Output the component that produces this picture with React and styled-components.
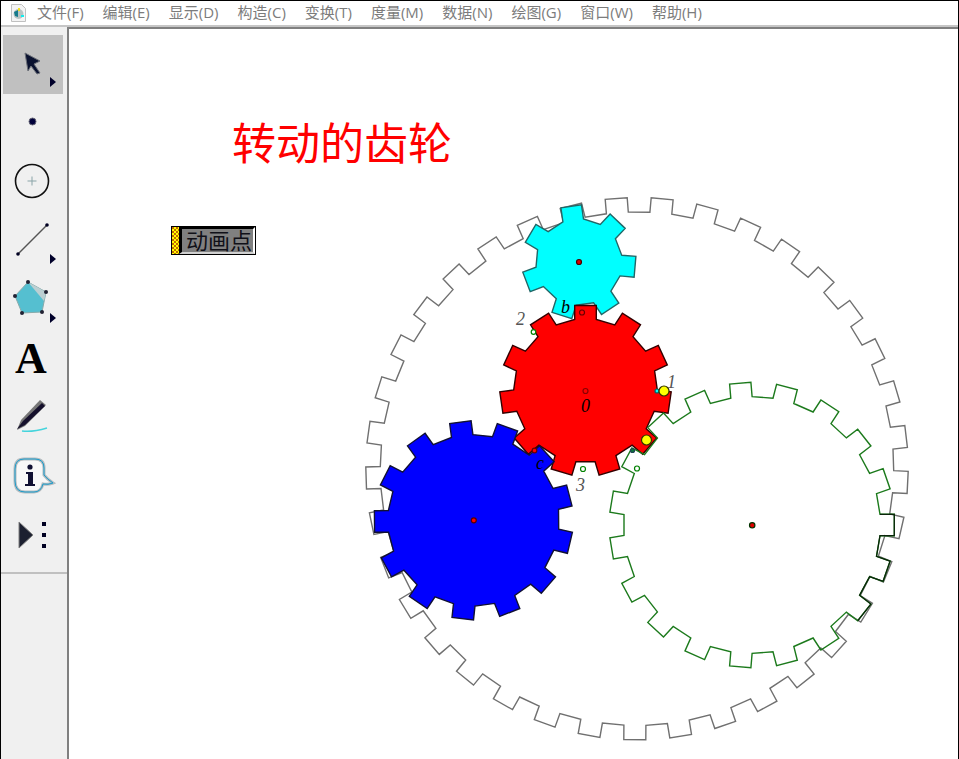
import React from "react";
import styled, { createGlobalStyle } from "styled-components";

const GlobalStyle = createGlobalStyle`
  * { box-sizing: border-box; }
  body { margin: 0; background: #fff; overflow: hidden; }
`;

const Window = styled.div`
  display: flex;
  flex-direction: column;
  height: 100vh;
  border: 1px solid #000;
  border-bottom: 0;
  background: #fff;
`;

const MenuBar = styled.nav`
  display: flex;
  align-items: center;
  gap: 19px;
  height: 24px;
  flex: none;
  padding-left: 10px;
`;

const AppIcon = styled.svg`
  width: 16px;
  height: 20px;
  flex: none;
  margin-right: -9px;
`;

const MenuItem = styled.button`
  padding: 0 0 2px;
  border: 0;
  background: none;
  color: #7c7c7c;
  font: 15px/20px "Open Sans", "Noto Sans CJK SC", sans-serif;
  white-space: nowrap;
`;

const Workspace = styled.div`
  display: flex;
  flex: 1;
  min-height: 0;
  border-top: 2px solid #c6c6c6;
`;

const ToolBar = styled.aside`
  display: flex;
  flex-direction: column;
  width: 66px;
  flex: none;
  padding-top: 8px;
  background: #f0f0f0;
`;

const ToolGroup = styled.div`
  display: flex;
  flex-direction: column;
  padding: 0 4px 6px 2px;
  border-bottom: 2px solid #c0c0c0;
`;

const ToolButton = styled.button`
  display: block;
  height: 59px;
  padding: 0;
  border: 0;
  background: ${(p) => (p.$active ? "#c0c0c0" : "transparent")};

  svg {
    display: block;
    width: 60px;
    height: 59px;
  }
`;

const Sketch = styled.main`
  position: relative;
  flex: 1;
  min-width: 0;
  overflow: hidden;
  border-top: 2px solid #808080;
  border-left: 2px solid #808080;
  background: #fff;
`;

const Drawing = styled.svg`
  display: block;
  width: 890px;
  height: 730px;
`;

const Title = styled.h1`
  position: absolute;
  left: 163px;
  top: 85px;
  margin: 0;
  color: #f00;
  font: 400 44px/54px "Noto Sans CJK SC", sans-serif;
  white-space: nowrap;
`;

const ActionButton = styled.button`
  position: absolute;
  left: 102px;
  top: 197px;
  display: flex;
  height: 29px;
  padding: 0;
  border: 1px solid #000;
  background: #808080;
`;

const ButtonGrip = styled.span`
  width: 7px;
  align-self: stretch;
  background: repeating-conic-gradient(#ff0 0 25%, #c46a00 0 50%) 0 0 / 4px 4px;
`;

const ButtonFace = styled.span`
  display: flex;
  align-items: center;
  height: 27px;
  padding: 0 1px 4px 4px;
  border-style: solid;
  border-color: #000 #fff #d0d0d0 #000;
  border-width: 2px 2px 2px 3px;
  color: #101018;
  font: 400 22px/32px "Noto Sans CJK SC", sans-serif;
  white-space: nowrap;
`;

const Label = styled.text`
  font: italic 18px "Liberation Serif", serif;
  fill: ${(p) => (p.$soft ? "#555" : "#000")};
`;

function gearPoints({ cx, cy, teeth, phase, root, tip, half }) {
  const points = [];
  for (let i = 0; i < teeth; i += 1) {
    const a = ((phase + (360 / teeth) * i) * Math.PI) / 180;
    const ux = Math.cos(a);
    const uy = Math.sin(a);
    [
      [root, -half],
      [tip, -half],
      [tip, half],
      [root, half],
    ].forEach(([r, s]) => {
      points.push(`${(cx + ux * r - uy * s).toFixed(1)},${(cy + uy * r + ux * s).toFixed(1)}`);
    });
  }
  return points;
}

const ring = { cx: 637, cy: 468.7, teeth: 37, phase: -94.4, root: 256.5, tip: 271, half: 11 };
const cyan = { cx: 579, cy: 262, teeth: 7, phase: 4.9, root: 42, tip: 56.2, half: 10.4 };
const red = { cx: 585.5, cy: 390.5, teeth: 11, phase: -90, root: 71, tip: 85, half: 10.8 };
const blue = { cx: 473.5, cy: 520.3, teeth: 13, phase: 179.3, root: 85, tip: 99, half: 10.8 };
const green = { cx: 752, cy: 525, teeth: 19, phase: 0, root: 128, tip: 142.3, half: 10.7 };

const points = [
  { x: 579, y: 262, r: 2.5, fill: "#e00000", stroke: "#400" },
  { x: 582, y: 312.5, r: 2.5, fill: "#f00", stroke: "#600" },
  { x: 585.5, y: 391, r: 2.5, fill: "#f00", stroke: "#800" },
  { x: 533.5, y: 332, r: 2.3, fill: "#fff", stroke: "#008000" },
  { x: 534.5, y: 450.5, r: 2.3, fill: "#f00", stroke: "#600" },
  { x: 583, y: 469, r: 2.5, fill: "#fff", stroke: "#008000" },
  { x: 637, y: 468.5, r: 2.5, fill: "#fff", stroke: "#008000" },
  { x: 632.5, y: 450.5, r: 2, fill: "#0a7a3a", stroke: "#245" },
  { x: 657, y: 391, r: 2, fill: "#0ff", stroke: "#066" },
  { x: 664, y: 391, r: 5, fill: "#ff0", stroke: "#330" },
  { x: 646.5, y: 440, r: 5, fill: "#ff0", stroke: "#330" },
  { x: 473.8, y: 520.3, r: 2.5, fill: "#f00", stroke: "#500" },
  { x: 752.2, y: 525.3, r: 2.7, fill: "#e00000", stroke: "#030" },
];

const labels = [
  { x: 561, y: 313, text: "b" },
  { x: 581, y: 412, text: "0" },
  { x: 536, y: 469, text: "c" },
  { x: 516, y: 325, text: "2", soft: true },
  { x: 667, y: 388, text: "1", soft: true },
  { x: 576, y: 491, text: "3", soft: true },
];

function Gear({ gear, fill = "none", stroke }) {
  return <polygon points={gearPoints(gear).join(" ")} fill={fill} stroke={stroke} strokeWidth="1.4" />;
}

function Gears() {
  return (
    <Drawing viewBox="69 29 890 730" role="img" aria-label="齿轮">
      <Gear gear={ring} stroke="#707070" />
      <Gear gear={cyan} fill="#0ff" stroke="#266" />
      <Gear gear={red} fill="#f00" stroke="#300" />
      <Gear gear={blue} fill="#00f" stroke="#113" />
      <Gear gear={green} stroke="#1c7a1c" />
      <polyline points={gearPoints(green).slice(0, 11).join(" ")} fill="none" stroke="#0a240a" strokeWidth="1.2" />
      {labels.map((l) => (
        <Label key={l.text} x={l.x} y={l.y} $soft={l.soft}>
          {l.text}
        </Label>
      ))}
      {points.map((p) => (
        <circle key={`${p.x}-${p.y}`} cx={p.x} cy={p.y} r={p.r} fill={p.fill} stroke={p.stroke} strokeWidth="1.2" />
      ))}
    </Drawing>
  );
}

const more = <path d="M47 42v10l6-5z" fill="#00002a" />;

const tools = [
  {
    name: "选择",
    art: (
      <>
        <path d="M22 18l15 8-6 3 6 9-3 1-6-8-3 5z" fill="#0a1230" stroke="#6c7078" />
        {more}
      </>
    ),
  },
  { name: "点", art: <circle cx="29.5" cy="27.5" r="3.5" fill="#00003a" stroke="#667" /> },
  {
    name: "圆",
    art: (
      <>
        <circle cx="29" cy="28" r="16.5" fill="none" stroke="#111" strokeWidth="1.6" />
        <path d="M24.5 28h9M29 23.5v9" stroke="#8aa4a8" />
      </>
    ),
  },
  {
    name: "线段",
    art: (
      <>
        <path d="M15 42L44 13" stroke="#555" strokeWidth="1.5" />
        <circle cx="15" cy="42" r="1.8" fill="#002" />
        <circle cx="44" cy="13" r="1.8" fill="#002" />
        {more}
      </>
    ),
  },
  {
    name: "多边形",
    art: (
      <>
        <path d="M25 11L43 21L39 41L19 42L12 25z" fill="#55bfd0" stroke="#8aa" />
        <path d="M25 11L43 21L41 30z" fill="#bccfd2" />
        {[[25, 11], [43, 21], [39, 41], [19, 42], [12, 25]].map(([x, y]) => (
          <circle key={x} cx={x} cy={y} r="2" fill="#223" />
        ))}
        {more}
      </>
    ),
  },
  {
    name: "文本",
    art: (
      <text x="28" y="43" textAnchor="middle" fontFamily="Liberation Serif, serif" fontWeight="700" fontSize="44">
        A
      </text>
    ),
  },
  {
    name: "标记",
    art: (
      <>
        <path d="M14 41L18 31L37 11l6 5L22 37z" fill="#777" />
        <path d="M14 40L20 32L39 14l3 3L22 36z" fill="#15102c" />
        <path d="M19 42c8 1 15 0 25-3" fill="none" stroke="#45d4dc" strokeWidth="1.5" />
      </>
    ),
  },
  {
    name: "信息",
    art: (
      <>
        <path
          d="M21 11h11q9 0 9 9v7q3 4 9 8-5 2-10 1-2 8-9 8H22q-10 0-10-11V21q0-10 9-10z"
          fill="#f8f8f8"
          stroke="#b4bcc0"
          strokeWidth="3"
        />
        <path
          d="M21 11h11q9 0 9 9v7q3 4 9 8-5 2-10 1-2 8-9 8H22q-10 0-10-11V21q0-10 9-10z"
          fill="none"
          stroke="#189ccc"
        />
        <circle cx="27" cy="19" r="2.6" fill="#113" />
        <path d="M23 24h7v12h2v2h-10v-2h3v-10h-2z" fill="#113" />
      </>
    ),
  },
  {
    name: "自定义工具",
    art: (
      <>
        <path d="M16 15v26l14-13z" fill="#1c2030" stroke="#808080" />
        <path d="M39 15h4v4h-4zM39 26h4v4h-4zM39 37h4v4h-4z" fill="#002" />
      </>
    ),
  },
];

const menus = [
  "文件(F)",
  "编辑(E)",
  "显示(D)",
  "构造(C)",
  "变换(T)",
  "度量(M)",
  "数据(N)",
  "绘图(G)",
  "窗口(W)",
  "帮助(H)",
];

export default function App() {
  return (
    <Window>
      <GlobalStyle />
      <MenuBar>
        <AppIcon viewBox="0 0 16 20" aria-hidden="true">
          <path d="M.5 1.5h10l4 4v13H.5z" fill="#f4f4f4" stroke="#c0c0c0" />
          <circle cx="7.5" cy="11" r="5" fill="#b8c4c4" />
          <path d="M3 9l4-2v7l-3-1z" fill="#157a8a" />
          <path d="M7 5h2v3H7z" fill="#f2e020" />
          <path d="M10 12h3v2h-3z" fill="#1ee" />
        </AppIcon>
        {menus.map((m) => (
          <MenuItem key={m} type="button">
            {m}
          </MenuItem>
        ))}
      </MenuBar>
      <Workspace>
        <ToolBar>
          <ToolGroup>
            {tools.map((t, i) => (
              <ToolButton key={t.name} type="button" aria-label={t.name} $active={i === 0}>
                <svg viewBox="0 0 60 59">{t.art}</svg>
              </ToolButton>
            ))}
          </ToolGroup>
        </ToolBar>
        <Sketch>
          <Gears />
          <Title>转动的齿轮</Title>
          <ActionButton type="button">
            <ButtonGrip />
            <ButtonFace>动画点</ButtonFace>
          </ActionButton>
        </Sketch>
      </Workspace>
    </Window>
  );
}
